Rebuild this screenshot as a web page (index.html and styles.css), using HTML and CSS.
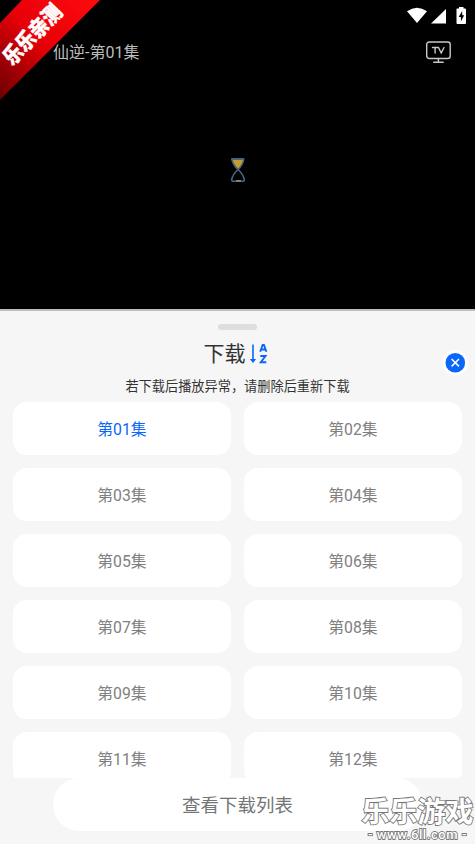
FILE: index.html
```html
<!DOCTYPE html>
<html lang="zh-CN">
<head>
<meta charset="utf-8">
<title>下载</title>
<link rel="stylesheet" href="styles.css">
</head>
<body>
<main class="screen">
  <section class="player">
    <div class="status">
      <svg width="60" height="20" viewBox="0 0 60 20" fill="#fff">
        <path d="M0 4.2Q10 -2.8 20 4.2L10 16Z"/>
        <path d="M24 16.500 39 2V16.500Z"/>
        <path d="M50 1.500h2V0h4.500v1.500H58q1 0 1 1V16q0 1-1 1h-7.500q-1 0-1-1V2.500q0-1 .5-1Z"/>
        <path d="M55.200 4 51.700 10h2.200V14.500l3.300-6.300h-2Z" fill="#000"/>
      </svg>
    </div>
    <header class="bar">
      <h1>仙逆-第01集</h1>
      <svg width="26" height="23" viewBox="0 0 26 23" fill="none" stroke="#c9c9c9" stroke-width="1.400" stroke-linecap="round">
        <rect x="1.700" y="1" width="23.500" height="16.500" rx="2.500"/>
        <path d="M13.400 17.500v3.500M8.700 21.300h9.500M7.500 6.500h5.200M10.100 6.500v5.500M13.500 6.500l2.700 5.500 2.800-5.500"/>
      </svg>
    </header>
    <div class="loading">
      <svg width="16" height="26" viewBox="0 0 16 26" fill="none" stroke="#49657c" stroke-width="1.600" stroke-linejoin="round">
        <path d="M1.800 2h12Q13 8 8 12.500 3 8 1.800 2Z" fill="#c79b34"/>
        <path d="M8 12.500Q13 17 14.300 22.500Q14.500 24.500 12 24.300H4Q1.500 24.500 1.700 22.500Q3 17 8 12.500Z"/>
        <path d="M1.500 2h12.500" stroke-width="1.800"/>
        <path d="M6 23.800h5" stroke="#b5b097" stroke-width="1"/>
      </svg>
    </div>
    <div class="corner"></div>
    <span class="corner-label">乐乐亲测</span>
  </section>
  <section class="sheet">
    <div class="handle"></div>
    <div class="title">
      <h2>下载</h2>
      <svg width="19" height="20" viewBox="0 0 19 20" fill="none" stroke="#0b67f9">
        <path d="M4 .5V17" stroke-width="1.600"/>
        <path d="M.8 15h6.400L4 19Z" fill="#0b67f9" stroke="none"/>
        <path d="M11.200 7.800 13.800 .5h1L17.400 7.800M12.200 5.500h4.200" stroke-width="1.900"/>
        <path d="M11.300 12h5.200L11.800 18.200h5.500" stroke-width="1.900"/>
      </svg>
    </div>
    <p class="hint">若下载后播放异常，请删除后重新下载</p>
    <div class="episodes">
      <div class="episode active">第01集</div><div class="episode">第02集</div>
      <div class="episode">第03集</div><div class="episode">第04集</div>
      <div class="episode">第05集</div><div class="episode">第06集</div>
      <div class="episode">第07集</div><div class="episode">第08集</div>
      <div class="episode">第09集</div><div class="episode">第10集</div>
      <div class="episode">第11集</div><div class="episode">第12集</div>
    </div>
    <div class="all">查看下载列表</div>
    <div class="close">
      <svg width="26" height="26" viewBox="0 0 26 26">
        <circle cx="13.300" cy="12.700" r="12.700" fill="#fff"/>
        <circle cx="13.300" cy="12.700" r="9.800" fill="#0b67f9"/>
        <path d="M9.600 9 17 16.400M17 9 9.600 16.400" stroke="#fff" stroke-width="1.500"/>
      </svg>
    </div>
  </section>
  <div class="watermark">
    <div class="brand">乐乐游戏</div>
    <div class="site">- www.6ll.com -</div>
  </div>
</main>
</body>
</html>
```
FILE: styles.css
```css
* { box-sizing: border-box; }
body { margin: 0; font-family: Roboto, "Noto Sans CJK SC", sans-serif; }
h1, h2, p { margin: 0; font-weight: 400; }
svg { display: block; }
.screen { position: relative; width: 475px; height: 844px; overflow: hidden; background: #f6f6f6; }
.player { position: relative; height: 311px; background: #000; border-bottom: 2px solid #bdbdbd; }
.status { display: flex; justify-content: flex-end; height: 32px; padding: 7px 8px 0 0; }
.bar { display: flex; justify-content: space-between; align-items: center; height: 40px; padding: 0 24px 0 53px; }
.bar h1 { color: #bcbcbc; font-size: 16px; line-height: 24px; padding-top: 1px; }
.loading { display: flex; justify-content: center; padding: 85px 0 0; }
.corner {
  position: absolute; left: 0; top: 0; width: 100px; height: 100px;
  background: linear-gradient(45deg, #6a0000 0%, #a80006 25%, #e80008 50%, #ff0a0e 100%);
  clip-path: polygon(22px 0, 100px 0, 0 100px, 0 23px);
}
.corner-label {
  position: absolute; left: -5px; top: 23px; width: 76px; line-height: 24px;
  color: #fff; font-size: 18.500px; font-weight: 900; text-align: center; white-space: nowrap;
  -webkit-text-stroke: .4px #fff; transform: rotate(-46deg) scaleY(1.150);
}
.sheet { position: relative; display: flex; flex-direction: column; align-items: center; height: 533px; padding-top: 13px; }
.handle { flex: none; width: 39px; height: 6px; border-radius: 3px; background: #dedede; }
.title { display: flex; align-items: center; gap: 3px; height: 47px; margin-right: 4px; }
.title h2 { color: #333; font-size: 21px; line-height: 30px; }
.hint { height: 25px; color: #333; font-size: 13.200px; line-height: 20px; }
.episodes {
  display: grid; grid-template-columns: 1fr 1fr; grid-auto-rows: 53px; gap: 13px;
  width: 100%; height: 376px; padding: 0 13px; overflow: hidden; flex: none;
}
.episode { display: flex; align-items: center; justify-content: center; padding-bottom: 1px; border-radius: 14px; background: #fff; color: #808080; font-size: 15.800px; }
.episode.active { color: #0b67f9; }
.all { display: flex; align-items: center; justify-content: center; flex: none; width: 370px; height: 53px; padding-bottom: 2px; border-radius: 27px; background: #fff; color: #757575; font-size: 18.500px; }
.close { position: absolute; left: 442px; top: 39px; }
.watermark {
  position: absolute; left: 360px; top: 798px; width: 115px;
  color: #fff; text-align: center; white-space: nowrap;
  -webkit-text-stroke: 1.800px #777; paint-order: stroke;
}
.brand { font-size: 28px; line-height: 29px; font-weight: 700; }
.site { font-size: 13px; line-height: 15px; font-weight: 500; letter-spacing: .6px; }
```
